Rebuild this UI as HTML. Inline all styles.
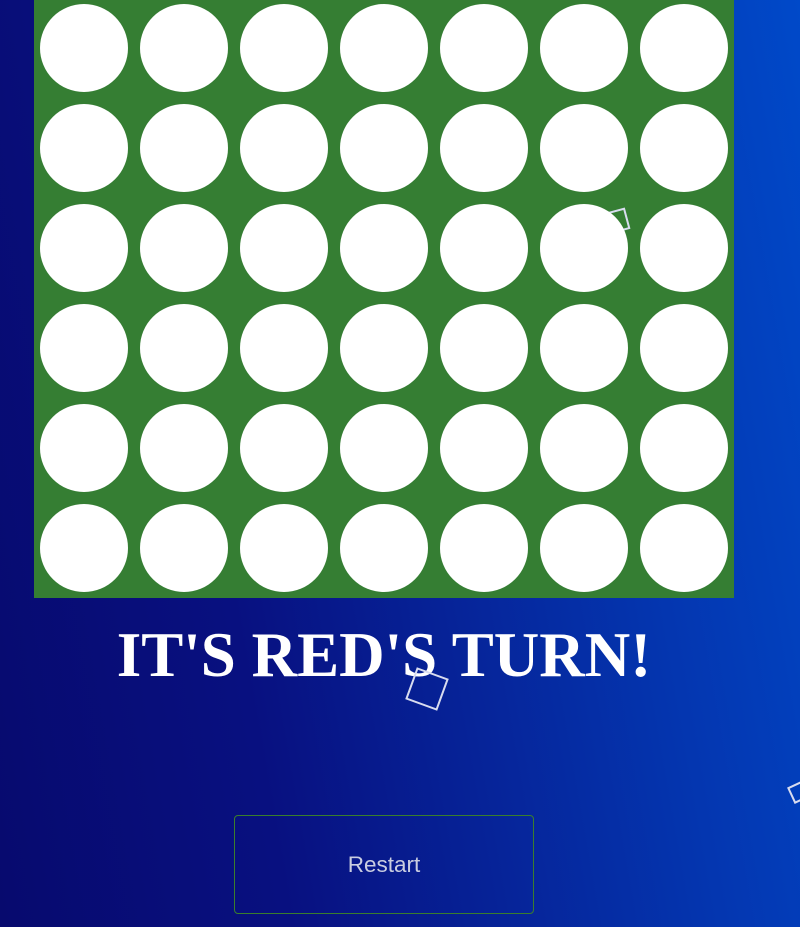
<!DOCTYPE html>
<html><head><style>
html,body{margin:0;padding:0;width:800px;height:927px;overflow:hidden;}
body{background:linear-gradient(80deg,#070a6e 0%,#081080 30%,#0436b0 75%,#0049c9 100%);position:relative;font-family:"Liberation Sans",sans-serif;}
.board{position:absolute;left:34px;top:0;width:700px;height:598px;background:#357e33;}
.c{position:absolute;width:88px;height:88px;border-radius:50%;background:#fff;z-index:2;}
.sq{position:absolute;border:2px solid #d8dcef;box-sizing:border-box;}
h1{position:absolute;left:0;width:768px;top:615px;margin:0;text-align:center;font-family:"Liberation Serif",serif;font-weight:bold;font-size:63px;color:#fff;line-height:80px;}
.btn{position:absolute;left:234px;top:815px;width:300px;height:99px;border:1px solid #3a7e2c;border-radius:4px;box-sizing:border-box;color:#c9cde0;font-size:22.5px;text-align:center;line-height:97px;}
</style></head><body>
<div class="board" id="b">
<div class="sq" style="left:572px;top:210px;width:22px;height:22px;transform:rotate(-15deg);z-index:1"></div>
</div>
<h1>IT'S RED'S TURN!</h1>
<div class="sq" style="left:410px;top:672px;width:34px;height:34px;transform:rotate(20deg)"></div>
<div class="sq" style="left:790px;top:783px;width:18px;height:18px;transform:rotate(-25deg)"></div>
<div class="btn">Restart</div>
<script>
var b=document.getElementById('b');
for(var r=0;r<6;r++)for(var c=0;c<7;c++){var d=document.createElement('div');d.className='c';d.style.left=(6+c*100)+'px';d.style.top=(4+r*100)+'px';b.appendChild(d);}
</script>
</body></html>
